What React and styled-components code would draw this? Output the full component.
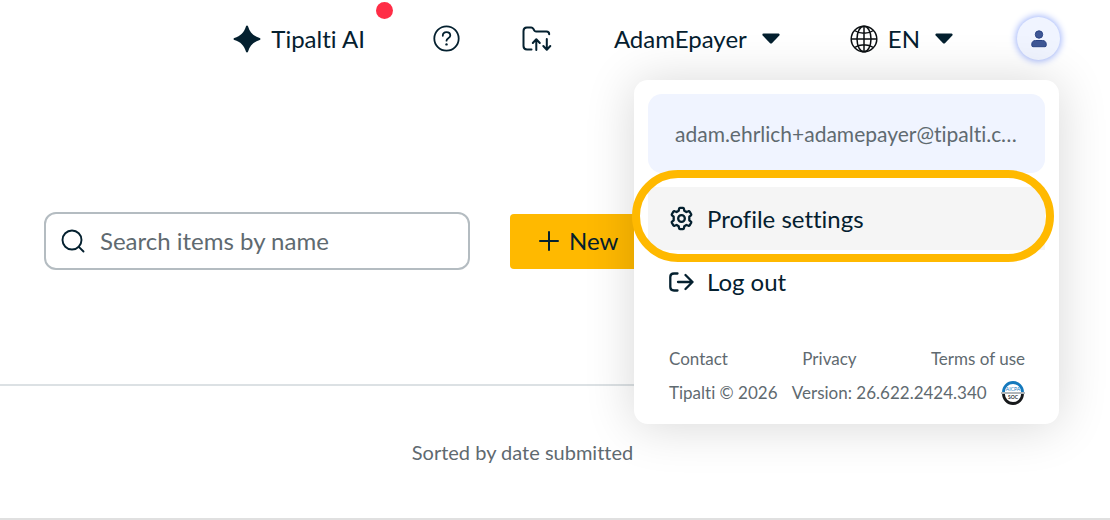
import React from "react";
import styled, { createGlobalStyle } from "styled-components";

const ink = "#04202f";
const grey = "#5f6a70";
const amber = "#ffb900";

const GlobalStyle = createGlobalStyle`
  *, *::before, *::after { box-sizing: border-box; }
  body { margin: 0; background: #fff; overflow-x: hidden; font-variant-ligatures: none; }
  body, button, input { font-family: Lato, "Liberation Sans", sans-serif; color: ${ink}; }
  button { background: none; border: 0; padding: 0; cursor: pointer; font-variant-ligatures: none; }
  svg { display: block; flex: none; }
`;

const Header = styled.header`
  display: flex;
  align-items: center;
  justify-content: flex-end;
  gap: 62px;
  height: 77px;
  padding-right: 50px;
`;

const NavButton = styled.button`
  position: relative;
  display: flex;
  align-items: center;
  gap: ${(p) => p.$gap || 0}px;
  padding-left: ${(p) => p.$lead || 0}px;
  font-size: 24px;
  line-height: 32px;
  white-space: nowrap;
`;

const Caret = styled.span`
  display: flex;
  padding-left: ${(p) => p.$space}px;
`;

const NotificationDot = styled.span`
  position: absolute;
  top: -21px;
  right: -28px;
  width: 17px;
  height: 17px;
  border-radius: 50%;
  background: #ff2d46;
`;

const Profile = styled.div`
  position: relative;
  padding-left: 2px;
`;

const Avatar = styled.button`
  display: grid;
  place-items: center;
  width: 43px;
  height: 43px;
  border-radius: 50%;
  background: #f0f4ff;
  box-shadow: 0 0 7px 1px #9db2fa;
`;

const Menu = styled.div`
  position: absolute;
  z-index: 2;
  top: 63px;
  right: 1px;
  width: 425px;
  padding: 14px;
  border-radius: 14px;
  background: #fff;
  box-shadow: 0 2px 50px rgba(0, 0, 0, 0.16);
`;

const Email = styled.div`
  margin-bottom: 14px;
  padding: 0 27px;
  border-radius: 14px;
  background: #f0f4ff;
  color: ${grey};
  font-size: 21px;
  line-height: 79px;
  white-space: nowrap;
  overflow: hidden;
  text-overflow: ellipsis;
`;

const MenuItem = styled.button`
  position: relative;
  display: flex;
  align-items: center;
  gap: 13px;
  width: 100%;
  height: 63px;
  padding: 0 21px;
  background: ${(p) => (p.$active ? "#f5f5f5" : "none")};
  font-size: 24px;
  line-height: 32px;
`;

const Ring = styled.span`
  position: absolute;
  inset: -17px -9px -12px -16px;
  border: 8px solid ${amber};
  border-radius: 46px;
  pointer-events: none;
`;

const MenuFooter = styled.footer`
  padding: 29px 20px 0 21px;
  color: ${grey};
  font-size: 17px;
  line-height: 34px;
`;

const FooterRow = styled.div`
  display: flex;
  align-items: center;
  justify-content: space-between;
  white-space: nowrap;
`;

const FooterLink = styled.a`
  color: inherit;
  text-decoration: none;
`;

const Toolbar = styled.div`
  display: flex;
  align-items: center;
  gap: 40px;
  padding: 135px 44px 114px;
`;

const SearchField = styled.label`
  display: flex;
  align-items: center;
  gap: 15px;
  flex: 0 1 426px;
  height: 58px;
  padding: 0 15px;
  border: 2px solid #b4bcc1;
  border-radius: 12px;
`;

const SearchInput = styled.input`
  flex: 1;
  min-width: 0;
  padding: 0;
  border: 0;
  outline: 0;
  background: none;
  font-size: 24px;
  line-height: 32px;
  &::placeholder { color: ${grey}; opacity: 1; }
`;

const NewButton = styled.button`
  display: flex;
  align-items: center;
  gap: 10px;
  height: 55px;
  padding: 0 29px;
  border-radius: 4px;
  background: ${amber};
  font-size: 24px;
  line-height: 32px;
`;

const SortBar = styled.section`
  margin-right: 65px;
  border-top: 2px solid #dce1e4;
  color: ${grey};
  font-size: 20px;
  line-height: 132px;
  text-align: center;
`;

const Divider = styled.hr`
  margin: 0;
  border: 0;
  border-top: 2px solid #e0e0e0;
`;

const SparkIcon = () => (
  <svg width="28" height="28" viewBox="0 0 28 28" fill={ink} aria-hidden="true">
    <path d="M14 .5c.5 0 .8.3 1 .8 1.900 6.300 5.400 9.800 11.700 11.700 1.100.3 1.100 1.700 0 2C20.400 16.900 16.900 20.400 15 26.700c-.3 1.100-1.700 1.100-2 0C11.100 20.400 7.600 16.900 1.300 15c-1.100-.3-1.100-1.700 0-2C7.600 11.100 11.100 7.600 13 1.300c.2-.5.5-.8 1-.8z" />
  </svg>
);

const HelpIcon = () => (
  <svg width="27" height="27" viewBox="0 0 27 27" fill="none" stroke={ink} strokeWidth="1.800" strokeLinecap="round" aria-hidden="true">
    <circle cx="13.500" cy="13.500" r="12.200" />
    <path d="M9.800 10.800c0-2.200 1.500-3.700 3.700-3.700s3.800 1.400 3.800 3.400c0 2.700-3.800 2.800-3.800 5.200" />
    <circle cx="13.500" cy="19.400" r="1.200" fill={ink} stroke="none" />
  </svg>
);

const FolderIcon = () => (
  <svg width="30" height="26" viewBox="0 0 30 26" fill="none" stroke={ink} strokeWidth="2" strokeLinecap="round" strokeLinejoin="round" aria-hidden="true">
    <path d="M9.500 23.500H5c-2.200 0-3.500-1.200-3.500-3.400V5c0-2.200 1.100-3.500 3.300-3.500h4.400c1 0 1.600.5 2.100 1.300l1 1.700c.4.700.8 1 1.700 1h10.500c1.800 0 2.700 1 2.700 2.700" />
    <path d="M14.300 24V13.500M10.800 17l3.500-3.800 3.500 3.800M24.800 13v10.500M21.300 20l3.500 3.800 3.500-3.800" />
  </svg>
);

const CaretIcon = () => (
  <svg width="18" height="11" viewBox="0 0 18 11" fill={ink} aria-hidden="true">
    <path d="M1.500.5h15c1 0 1.500 1.100.8 1.900l-7.100 7.500c-.7.700-1.700.7-2.400 0L.7 2.400C0 1.600.5.500 1.500.5z" />
  </svg>
);

const GlobeIcon = () => (
  <svg width="28" height="28" viewBox="0 0 28 28" fill="none" stroke="#0b0f12" strokeWidth="1.500" aria-hidden="true">
    <circle cx="14" cy="14" r="12.800" />
    <ellipse cx="14" cy="14" rx="7" ry="12.800" />
    <path d="M14 1.200v25.600M1.200 14h25.600M4.500 5.500c5.200 3.600 13.800 3.600 19 0M4.500 22.500c5.200-3.600 13.800-3.600 19 0" />
  </svg>
);

const UserIcon = () => (
  <svg width="16" height="18" viewBox="0 0 16 18" fill="#3f5795" stroke="#2b4485" strokeWidth="1" aria-hidden="true">
    <circle cx="8" cy="4.500" r="3.700" />
    <path d="M4.500 10.500h7c2.200 0 3.700 1.500 3.700 3.500v1.500c0 .8-.5 1.200-1.200 1.200H2c-.7 0-1.200-.4-1.200-1.200V14c0-2 1.500-3.500 3.700-3.500z" />
  </svg>
);

const SearchIcon = () => (
  <svg width="24" height="24" viewBox="0 0 24 24" fill="none" stroke={ink} strokeWidth="1.900" strokeLinecap="round" aria-hidden="true">
    <circle cx="11" cy="11" r="9.500" />
    <path d="M17.800 17.800l4.700 4.700" />
  </svg>
);

const PlusIcon = () => (
  <svg width="20" height="20" viewBox="0 0 20 20" fill="none" stroke={ink} strokeWidth="2" strokeLinecap="round" aria-hidden="true">
    <path d="M10 1v18M1 10h18" />
  </svg>
);

const GearIcon = () => (
  <svg width="25" height="25" viewBox="0 0 24 24" fill="none" stroke={ink} strokeWidth="2.200" strokeLinejoin="round" aria-hidden="true">
    <path d="M10.500 1.800h3q.7 0 .8.700l.4 2.100 2 1.200 2.100-.8q.6-.2 1 .4l1.500 2.500q.3.600-.2 1l-1.600 1.400v3.400l1.600 1.400q.5.400.2 1l-1.500 2.500q-.4.600-1 .4l-2.100-.8-2 1.200-.4 2.100q-.1.700-.8.700h-3q-.7 0-.8-.7l-.4-2.100-2-1.200-2.100.8q-.6.200-1-.4l-1.500-2.500q-.3-.6.200-1l1.600-1.400v-3.400L2.900 8.900q-.5-.4-.2-1l1.500-2.500q.4-.6 1-.4l2.100.8 2-1.200.4-2.100q.1-.7.800-.7z" />
    <circle cx="12" cy="12" r="3.200" />
  </svg>
);

const LogoutIcon = () => (
  <svg width="25" height="20" viewBox="0 0 25 20" fill="none" stroke={ink} strokeWidth="2.300" strokeLinecap="round" strokeLinejoin="round" aria-hidden="true">
    <path d="M8.500 1.500H5C2.500 1.500 1.300 2.700 1.300 5v10c0 2.300 1.200 3.500 3.700 3.500h3.500M9 10h14.500M16.500 3l7 7-7 7" />
  </svg>
);

const SocBadge = () => (
  <svg width="24" height="24" viewBox="0 0 24 24" role="img" aria-label="AICPA SOC">
    <circle cx="12" cy="12" r="9.500" fill="#fff" />
    <path d="M2.500 11a9.500 9.500 0 0 1 19 0" fill="none" stroke="#1479bd" strokeWidth="2.800" />
    <path d="M2.500 13a9.500 9.500 0 0 0 19 0" fill="none" stroke="#17191b" strokeWidth="2.800" />
    <path d="M0 12h24" stroke="#8e979d" strokeWidth="1.400" />
    <text x="12" y="10" textAnchor="middle" fontSize="5" fontFamily="Lato" fill="#1479bd">AICPA</text>
    <text x="12" y="18" textAnchor="middle" fontSize="5" fontWeight="700" fontFamily="Lato" fill="#33383b">SOC</text>
  </svg>
);

export default function App() {
  return (
    <>
      <GlobalStyle />
      <Header>
        <NavButton $gap={10}>
          <SparkIcon />
          Tipalti AI
          <NotificationDot />
        </NavButton>
        <NavButton $lead={6} aria-label="Help">
          <HelpIcon />
        </NavButton>
        <NavButton aria-label="File transfers">
          <FolderIcon />
        </NavButton>
        <NavButton>
          AdamEpayer
          <Caret $space={15}>
            <CaretIcon />
          </Caret>
        </NavButton>
        <NavButton $gap={10} $lead={8}>
          <GlobeIcon />
          EN
          <Caret $space={5}>
            <CaretIcon />
          </Caret>
        </NavButton>
        <Profile>
          <Avatar aria-label="Account">
            <UserIcon />
          </Avatar>
          <Menu>
            <Email>adam.ehrlich+adamepayer@tipalti.com</Email>
            <MenuItem $active>
              <GearIcon />
              Profile settings
              <Ring />
            </MenuItem>
            <MenuItem>
              <LogoutIcon />
              Log out
            </MenuItem>
            <MenuFooter>
              <FooterRow>
                <FooterLink href="#contact">Contact</FooterLink>
                <FooterLink href="#privacy">Privacy</FooterLink>
                <FooterLink href="#terms">Terms of use</FooterLink>
              </FooterRow>
              <FooterRow>
                <span>Tipalti © 2026</span>
                <span>Version: 26.622.2424.340</span>
                <SocBadge />
              </FooterRow>
            </MenuFooter>
          </Menu>
        </Profile>
      </Header>
      <main>
        <Toolbar>
          <SearchField>
            <SearchIcon />
            <SearchInput type="text" placeholder="Search items by name" aria-label="Search items by name" />
          </SearchField>
          <NewButton>
            <PlusIcon />
            New
          </NewButton>
        </Toolbar>
        <SortBar>Sorted by date submitted</SortBar>
        <Divider />
      </main>
    </>
  );
}
